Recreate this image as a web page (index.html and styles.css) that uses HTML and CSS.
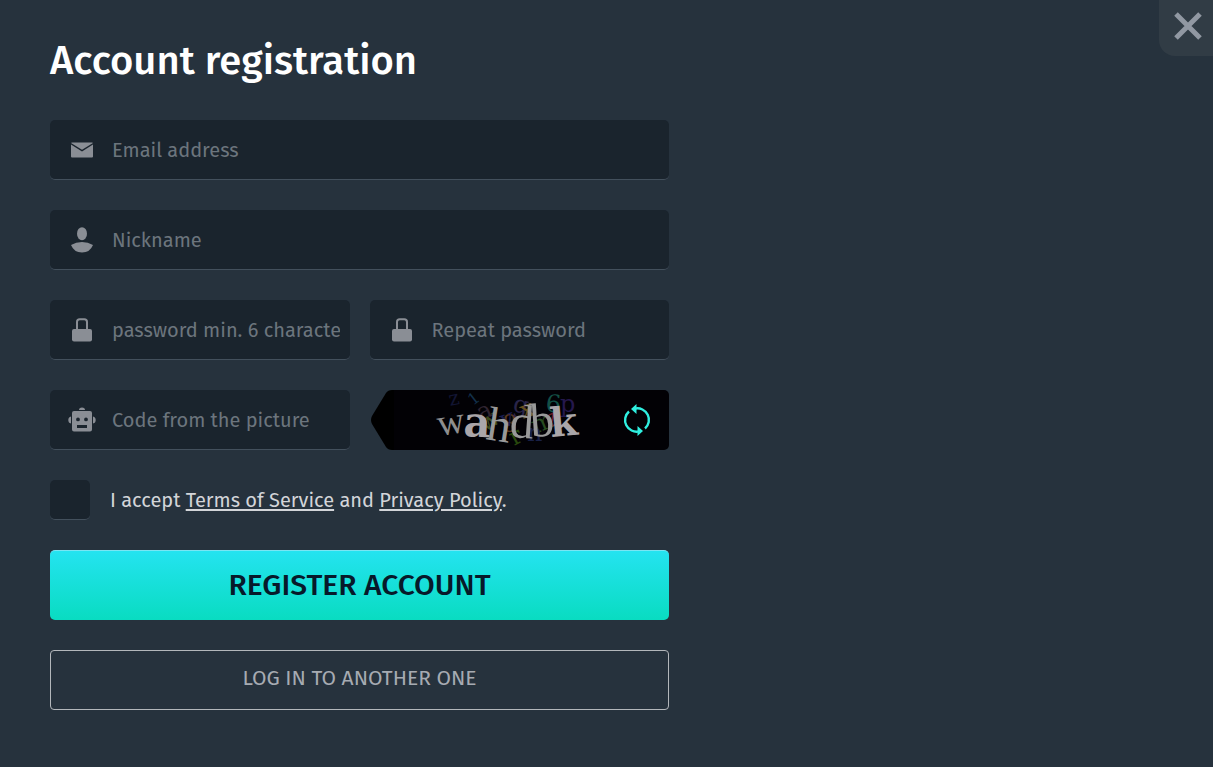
FILE: index.html
```html
<!DOCTYPE html>
<html lang="en">
<head>
  <meta charset="utf-8">
  <title>Account registration</title>
  <link rel="stylesheet" href="styles.css">
</head>
<body>
  <button class="close" type="button" aria-label="Close">
    <svg width="28" height="28" viewBox="0 0 28 28"><path d="M2 2L26 26M26 2L2 26"/></svg>
  </button>

  <main class="registration">
    <h1>Account registration</h1>
    <form class="form">
      <label class="field">
        <svg class="icon" width="28" height="28" viewBox="0 0 28 28">
          <path d="M3 8.500L14 15.500L25 8.500V20.500Q25 21.500 24 21.500H4Q3 21.500 3 20.500Z"/>
          <path d="M4 6.500H24Q24.700 6.500 25 7L14 13.700L3 7Q3.300 6.500 4 6.500Z"/>
        </svg>
        <input type="email" placeholder="Email address" aria-label="Email address">
      </label>
      <label class="field">
        <svg class="icon" width="28" height="28" viewBox="0 0 28 28">
          <ellipse cx="14" cy="7.700" rx="5" ry="6.500"/>
          <path d="M3 19Q8 16 14 16T25 19Q22 26.500 14 26.500T3 19Z"/>
        </svg>
        <input type="text" placeholder="Nickname" aria-label="Nickname">
      </label>
      <div class="columns">
        <label class="field">
          <svg class="icon" width="28" height="28" viewBox="0 0 28 28">
            <path d="M9 14V6Q9 3.300 11.700 3.300H16.300Q19 3.300 19 6V14" fill="none" stroke="#8a8e95" stroke-width="2"/>
            <rect x="4" y="13" width="20" height="12.500" rx="2"/>
          </svg>
          <input type="password" placeholder="password min. 6 characters" aria-label="Password">
        </label>
        <label class="field">
          <svg class="icon" width="28" height="28" viewBox="0 0 28 28">
            <path d="M9 14V6Q9 3.300 11.700 3.300H16.300Q19 3.300 19 6V14" fill="none" stroke="#8a8e95" stroke-width="2"/>
            <rect x="4" y="13" width="20" height="12.500" rx="2"/>
          </svg>
          <input type="password" placeholder="Repeat password" aria-label="Repeat password">
        </label>
      </div>
      <div class="columns">
        <label class="field">
          <svg class="icon" width="28" height="28" viewBox="0 0 28 28">
            <path fill-rule="evenodd" d="M6 5H22Q24 5 24 7V23.500Q24 25.500 22 25.500H6Q4 25.500 4 23.500V7Q4 5 6 5ZM10 11.500A1.900 1.900 0 1 0 10 15.300A1.900 1.900 0 1 0 10 11.500ZM18 11.500A1.900 1.900 0 1 0 18 15.300A1.900 1.900 0 1 0 18 11.500ZM9 19V22H19V19Z"/>
            <path d="M11 4Q11 1.500 14 1.500T17 4ZM3 10.500V17.500Q0.300 17 0.300 14T3 10.500ZM25 10.500V17.500Q27.700 17 27.700 14T25 10.500Z"/>
          </svg>
          <input type="text" placeholder="Code from the picture" aria-label="Code from the picture">
        </label>
        <div class="captcha">
          <svg class="captcha-arrow" width="24" height="60" viewBox="0 0 24 60"><path d="M24 0H22Q18 0 16 3L2 26Q0 30 2 34L16 57Q18 60 22 60H24Z"/></svg>
          <div class="captcha-box">
            <svg class="captcha-picture" width="200" height="60" viewBox="0 0 200 60">
              <g class="noise">
                <text x="56" y="16" font-size="20" fill="#121533" transform="rotate(-12 56 16)">z</text>
                <text x="79" y="16" font-size="16" fill="#12304a" transform="rotate(-38 79 16)">1</text>
                <text x="87" y="31" fill="#302431" transform="rotate(-25 87 31)">a</text>
                <text x="91" y="43" fill="#3d4b1c" transform="rotate(-35 91 43)">w</text>
                <text x="108" y="42" fill="#56351f">8</text>
                <text x="118" y="21" fill="#292449" transform="rotate(12 118 21)">g</text>
                <text x="129" y="29" fill="#66501c" transform="rotate(-20 129 29)">x</text>
                <text x="109" y="38" fill="#191d4e" transform="rotate(-18 109 38)">v</text>
                <text x="151" y="21" fill="#135045" transform="rotate(6 151 21)">6</text>
                <text x="166" y="22" fill="#25184d">p</text>
                <text x="141" y="44" fill="#274b20" transform="rotate(-22 141 44)">m</text>
                <text x="155" y="38" fill="#681b20" transform="rotate(-25 155 38)">z</text>
                <text x="120" y="56" fill="#28480d" transform="rotate(-28 120 56)">r</text>
                <text x="133" y="51" fill="#182047">n</text>
              </g>
              <g class="code">
                <text x="45" y="46" font-size="38" fill="#8e8e8e" transform="rotate(-9 45 46)">w</text>
                <text class="heavy" x="69" y="46" font-size="42" transform="rotate(3 69 46)">a</text>
                <text x="91" y="49" font-size="48" transform="rotate(9 91 49)">h</text>
                <text x="115" y="47" font-size="48" transform="rotate(4 115 47)">d</text>
                <text x="137" y="47" font-size="48" transform="rotate(-4 137 47)">b</text>
                <text class="heavy" x="157" y="47" font-size="40" transform="rotate(-5 157 47)">k</text>
              </g>
            </svg>
            <button class="refresh" type="button" aria-label="New picture">
              <svg width="28" height="32" viewBox="0 0 28 32">
                <path d="M6 7.500A11.500 11.500 0 0 0 16 27.400M22 24.500A11.500 11.500 0 0 0 12 4.600" fill="none" stroke="#2fefe0" stroke-width="2.400"/>
                <path d="M8 5L13.500 0V10ZM20 27L14.500 22V32Z" fill="#2fefe0"/>
              </svg>
            </button>
          </div>
        </div>
      </div>
      <div class="terms">
        <input type="checkbox" id="accept">
        <label for="accept">I accept <a href="#">Terms of Service</a> and <a href="#">Privacy Policy</a>.</label>
      </div>
      <button class="register" type="submit">REGISTER ACCOUNT</button>
      <button class="login" type="button">LOG IN TO ANOTHER ONE</button>
    </form>
  </main>
</body>
</html>
```
FILE: styles.css
```css
* {
  box-sizing: border-box;
}

body {
  margin: 0;
  background-color: #26323d;
  font-family: "Fira Sans", "Noto Sans", sans-serif;
  font-size: 20px;
  color: #d3d5d9;
}

input, button {
  font-family: inherit;
  margin: 0;
}

button {
  cursor: pointer;
}

.close {
  position: absolute;
  top: 0;
  right: 0;
  width: 54px;
  height: 56px;
  padding: 0 0 4px 4px;
  border: none;
  border-radius: 0 0 0 16px;
  background-color: #313c45;
}

.close svg {
  display: block;
  margin: auto;
  fill: none;
  stroke: #9198a2;
  stroke-width: 5;
}

.registration {
  max-width: 719px;
  padding: 30px 50px;
}

h1 {
  margin: 0 0 28px;
  font-size: 40px;
  font-weight: 500;
  line-height: 62px;
  color: #fff;
}

.form {
  display: flex;
  flex-direction: column;
  gap: 30px;
}

.columns {
  display: grid;
  grid-template-columns: repeat(2, minmax(0, 1fr));
  gap: 20px;
}

.field {
  display: flex;
  align-items: center;
  gap: 16px;
  height: 60px;
  padding: 0 10px 0 18px;
  border-bottom: 1px solid #43505c;
  border-radius: 5px;
  background-color: #1a242d;
}

.icon {
  flex: none;
  fill: #8a8e95;
}

.field input {
  flex: 1;
  min-width: 0;
  height: 59px;
  padding: 0;
  border: none;
  outline: none;
  background: none;
  font-size: 20px;
  color: #d3d5d9;
}

.field input::placeholder {
  color: #6c757d;
  opacity: 1;
}

/* Captcha picture with the pointer on its left */
.captcha {
  display: flex;
}

.captcha-arrow {
  flex: none;
}

.captcha-box {
  display: flex;
  flex: 1;
  align-items: center;
  justify-content: space-between;
  min-width: 0;
  height: 60px;
  padding-right: 18px;
  border-radius: 0 5px 5px 0;
  background-color: #020105;
}

.noise {
  font-family: "DejaVu Serif", serif;
  font-size: 24px;
}

.code {
  font-family: "Liberation Serif", serif;
  fill: #999;
}

.heavy {
  font-family: "DejaVu Serif", serif;
  font-weight: bold;
  fill: #aaa6a9;
}

.refresh {
  padding: 0;
  border: none;
  background: none;
}

.refresh svg {
  display: block;
}

.terms {
  display: flex;
  align-items: center;
  gap: 20px;
}

.terms input {
  appearance: none;
  width: 40px;
  height: 40px;
  border-bottom: 1px solid #43505c;
  border-radius: 5px;
  background-color: #1a242d;
}

.terms input:checked {
  background-color: #19dfda;
}

.terms a {
  color: inherit;
  text-underline-offset: 2px;
}

.register {
  height: 70px;
  padding-bottom: 3px;
  border: none;
  border-top: 1px solid #79e5f3;
  border-radius: 5px;
  background: linear-gradient(#24e3f0, #09dcc1);
  font-size: 30px;
  font-weight: 500;
  color: #07192a;
}

.login {
  height: 60px;
  padding-bottom: 5px;
  border: 1px solid #b3b7bb;
  border-radius: 4px;
  background: none;
  font-size: 21px;
  color: #a6abb2;
}
```
